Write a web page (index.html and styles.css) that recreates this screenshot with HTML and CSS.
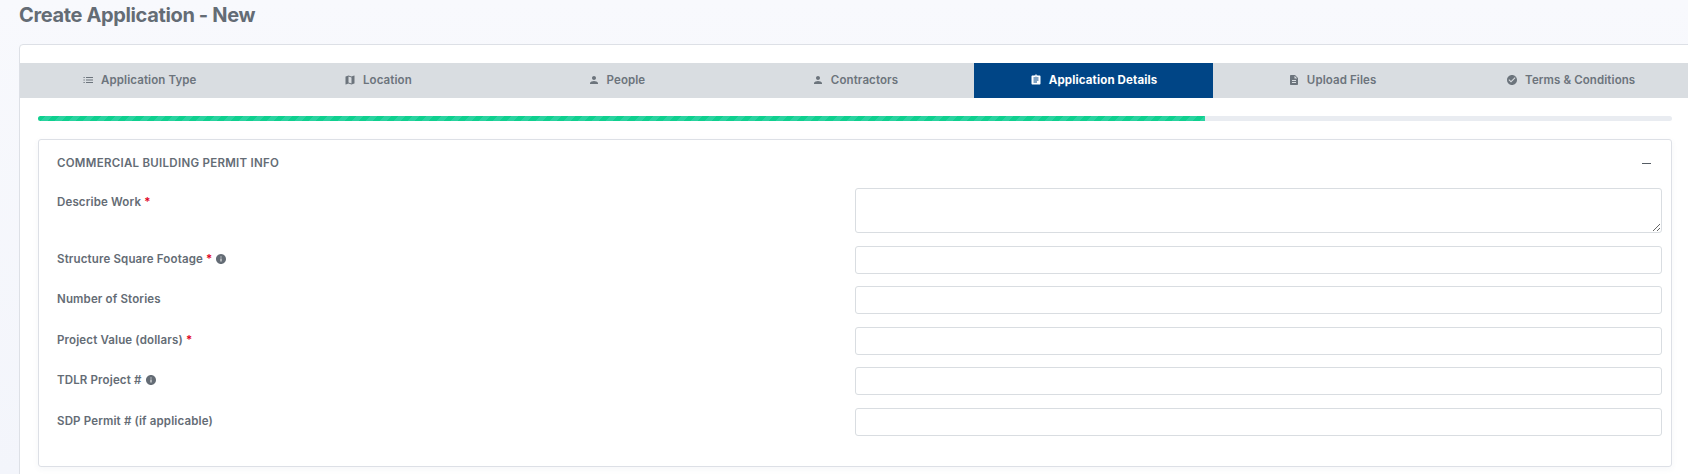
FILE: index.html
```html
<!DOCTYPE html>
<html lang="en">
<head>
<meta charset="utf-8">
<title>Create Application - New</title>
<link rel="stylesheet" href="styles.css">
</head>
<body>
<svg class="defs" width="0" height="0" aria-hidden="true">
  <symbol id="i-list" viewBox="0 0 24 24"><path d="M3 6h2.5v2H3zM8 6h14v2H8zM3 11h2.5v2H3zM8 11h14v2H8zM3 16h2.5v2H3zM8 16h14v2H8z"/></symbol>
  <symbol id="i-map" viewBox="0 0 24 24"><path d="M20.5 3l-.16.03L15 5.1 9 3 3.36 4.9c-.21.07-.36.25-.36.48V20.5c0 .28.22.5.5.5l.16-.03L9 18.9l6 2.1 5.64-1.9c.21-.07.36-.25.36-.48V3.5c0-.28-.22-.5-.5-.5zM15 19l-6-2.11V5l6 2.11V19z"/></symbol>
  <symbol id="i-person" viewBox="0 0 24 24"><path d="M12 12c2.21 0 4-1.79 4-4s-1.79-4-4-4-4 1.79-4 4 1.79 4 4 4zm0 2c-2.67 0-8 1.34-8 4v2h16v-2c0-2.66-5.33-4-8-4z"/></symbol>
  <symbol id="i-assign" viewBox="0 0 24 24"><path d="M19 3h-4.18C14.4 1.84 13.3 1 12 1c-1.3 0-2.4.84-2.82 2H5c-1.1 0-2 .9-2 2v14c0 1.1.9 2 2 2h14c1.1 0 2-.9 2-2V5c0-1.1-.9-2-2-2zm-7 0c.55 0 1 .45 1 1s-.45 1-1 1-1-.45-1-1 .45-1 1-1zm2 14H7v-2h7v2zm3-4H7v-2h10v2zm0-4H7V7h10v2z"/></symbol>
  <symbol id="i-file" viewBox="0 0 24 24"><path d="M14 2H6c-1.1 0-1.99.9-1.99 2L4 20c0 1.1.89 2 1.99 2H18c1.1 0 2-.9 2-2V8l-6-6zm2 16H8v-2h8v2zm0-4H8v-2h8v2zm-3-5V3.5L18.5 9H13z"/></symbol>
  <symbol id="i-check" viewBox="0 0 24 24"><path d="M12 2C6.48 2 2 6.48 2 12s4.48 10 10 10 10-4.48 10-10S17.52 2 12 2zm-2 15l-5-5 1.41-1.41L10 14.17l7.59-7.59L19 8l-9 9z"/></symbol>
  <symbol id="i-info" viewBox="0 0 24 24"><path d="M12 2C6.48 2 2 6.48 2 12s4.48 10 10 10 10-4.48 10-10S17.52 2 12 2zm1 15h-2v-6h2v6zm0-8h-2V7h2v2z"/></symbol>
</svg>
<main class="page">
  <h1 class="title">Create Application - New</h1>
  <section class="card">
    <nav class="tabs">
      <a class="tab"><svg class="tab-icon"><use href="#i-list"/></svg>Application Type</a>
      <a class="tab"><svg class="tab-icon"><use href="#i-map"/></svg>Location</a>
      <a class="tab"><svg class="tab-icon"><use href="#i-person"/></svg>People</a>
      <a class="tab"><svg class="tab-icon"><use href="#i-person"/></svg>Contractors</a>
      <a class="tab tab-active"><svg class="tab-icon"><use href="#i-assign"/></svg>Application Details</a>
      <a class="tab"><svg class="tab-icon"><use href="#i-file"/></svg>Upload Files</a>
      <a class="tab"><svg class="tab-icon"><use href="#i-check"/></svg>Terms &amp; Conditions</a>
    </nav>
    <div class="body">
      <div class="progress"><div class="progress-fill"></div></div>
      <section class="panel">
        <header class="panel-head">
          <h2 class="panel-title">COMMERCIAL BUILDING PERMIT INFO</h2>
          <span class="collapse"></span>
        </header>
        <form class="fields">
          <label class="label label-top">Describe Work <span class="req">*</span></label>
          <textarea class="control area"></textarea>
          <label class="label">Structure Square Footage <span class="req">*</span> <svg class="info"><use href="#i-info"/></svg></label>
          <input class="control" type="text">
          <label class="label">Number of Stories</label>
          <input class="control" type="text">
          <label class="label">Project Value (dollars) <span class="req">*</span></label>
          <input class="control" type="text">
          <label class="label">TDLR Project # <svg class="info"><use href="#i-info"/></svg></label>
          <input class="control" type="text">
          <label class="label">SDP Permit # (if applicable)</label>
          <input class="control" type="text">
        </form>
      </section>
    </div>
  </section>
</main>
</body>
</html>
```
FILE: styles.css
```css
* { box-sizing: border-box; }
html, body { margin: 0; height: 100%; overflow: hidden; }
body {
  background: linear-gradient(#f8f9fd, #f3f5fb);
  font-family: Inter, "Noto Sans", sans-serif;
  color: #646c75;
}
.defs { display: block; height: 0; }
.page { padding: 0 0 0 19px; }
.title {
  margin: 0;
  height: 44px;
  padding-top: 2px;
  font-size: 20px;
  line-height: 26px;
  font-weight: 700;
  letter-spacing: -.018em;
  color: #646c75;
}
.card {
  margin-right: -3px;
  background: #fff;
  border: 1px solid #dde0e6;
  border-radius: 4px 0 0 0;
  padding-top: 18px;
  height: 440px;
}
.tabs {
  display: grid;
  grid-template-columns: repeat(7, 1fr);
  height: 35px;
  background: #d9dde1;
}
.tab {
  display: flex;
  align-items: center;
  justify-content: center;
  gap: 7px;
  padding-bottom: 1px;
  font-size: 11.5px;
  font-weight: 600;
  letter-spacing: .1px;
  color: #6c747c;
}
.tab-active { background: #004586; color: #fff; font-weight: 700; letter-spacing: .15px; }
.tab-icon { width: 12px; height: 12px; fill: currentColor; }
.body { padding: 18px 18px 0; }
.progress {
  height: 5px;
  background: #e9ecf1;
  border-radius: 3px;
  overflow: hidden;
}
.progress-fill {
  width: 71.4%;
  height: 100%;
  background: repeating-linear-gradient(135deg, #0fd08f 0 5px, #2ad3a0 5px 10px);
}
.panel {
  margin-top: 18px;
  height: 328px;
  border: 1px solid #dde0e6;
  border-radius: 3px;
  padding: 0 9px 0 18px;
  box-shadow: 0 2px 6px rgba(60, 80, 120, .05);
}
.panel-head {
  display: flex;
  justify-content: space-between;
  align-items: center;
  height: 46px;
}
.panel-title {
  margin: 0;
  font-size: 11.5px;
  font-weight: 600;
  letter-spacing: .28px;
  color: #646c75;
}
.collapse {
  width: 9px;
  height: 1px;
  margin-right: 11px;
  background: #555c64;
}
.fields {
  display: grid;
  grid-template-columns: 798px 1fr;
  row-gap: 12.5px;
  align-items: center;
  margin-top: 2px;
}
.label {
  padding-bottom: 2px;
  font-size: 11.5px;
  font-weight: 600;
  letter-spacing: .15px;
  color: #646c75;
  display: block;
}
.label-top { align-self: start; padding-top: 7px; padding-bottom: 0; }
.req { color: #e0001b; }
.info { width: 12px; height: 12px; fill: #646c75; vertical-align: -2px; }
.control {
  display: block;
  width: 100%;
  height: 28px;
  border: 1px solid #d9dde1;
  border-radius: 3px;
  background: #fff;
  font: inherit;
}
.area { height: 45px; resize: vertical; }
```
